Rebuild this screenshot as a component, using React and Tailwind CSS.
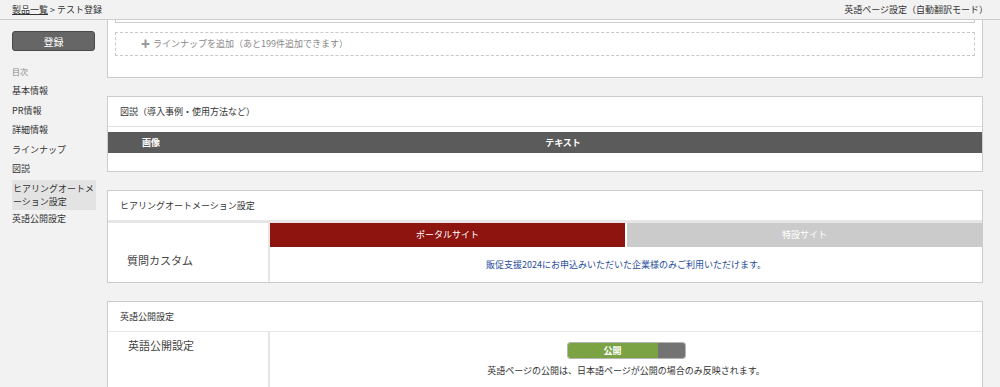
import React from 'react';

const menu = ['基本情報', 'PR情報', '詳細情報', 'ラインナップ', '図説'];

const Card = ({ title, children, className = '' }) => (
  <div className={`bg-white border border-[#cccccc] ${className}`}>
    {title && (
      <div className="h-[29px] px-[12px] flex items-center text-[9px] text-[#333]">{title}</div>
    )}
    {children}
  </div>
);

const App = () => {
  return (
    <div className="h-[387px] overflow-hidden bg-[#f2f2f2] font-['Noto_Sans_CJK_JP',sans-serif] text-[#333]">
      {/* top bar */}
      <div className="h-[20px] border-b border-[#cccccc] flex items-center justify-between pl-[12px] pr-[12px] text-[9px]">
        <div>
          <span className="underline">製品一覧</span> &gt; テスト登録
        </div>
        <div>英語ページ設定（自動翻訳モード）</div>
      </div>

      <div className="flex">
        {/* sidebar */}
        <div className="w-[107px] shrink-0 px-[12px] pt-[11px]">
          <button className="block w-[83px] h-[20px] rounded-[3px] bg-[#666666] border border-[#4a4a4a] text-white text-[10px]">
            登録
          </button>
          <div className="mt-[15px] text-[8px] leading-[12px] text-[#888]">目次</div>
          <ul className="mt-[3px] text-[9px] text-[#333]">
            {menu.map((m) => (
              <li key={m} className="h-[19.5px] flex items-center">{m}</li>
            ))}
            <li className="bg-[#e3e3e3] w-[84px] px-[1px] py-[2px] leading-[13px] mt-[1px]">
              ヒアリングオートメーション設定
            </li>
            <li className="h-[19px] flex items-center">英語公開設定</li>
          </ul>
        </div>

        {/* main */}
        <div className="flex-1 pr-[17px] flex flex-col gap-[18px]">
          <Card className="border-t-0">
            <div className="mx-[7px] h-[3px] border border-t-0 border-[#cccccc]" />
            <div className="mx-[7px] mt-[9px] h-[24px] border border-dashed border-[#c8c8c8] flex items-center pl-[25px] text-[9px] text-[#888]">
              <span className="mr-[3px] font-bold text-[#999]">✚</span>ラインナップを追加（あと199件追加できます）
            </div>
            <div className="h-[21px]" />
          </Card>

          <Card title="図説（導入事例・使用方法など）">
            <div className="border-t border-[#e0e0e0] pt-[5px]">
              <div className="h-[21px] bg-[#5b5b5b] flex items-center text-white text-[9px] font-bold">
                <div className="w-[86px] text-center">画像</div>
                <div className="w-[738px] text-center">テキスト</div>
              </div>
              <div className="h-[18px]" />
            </div>
          </Card>

          <Card title="ヒアリングオートメーション設定">
            <div className="border-t-[3px] border-[#e6e6e6] flex h-[62px]">
              <div className="w-[162px] border-r-2 border-[#e6e6e6] pl-[19px] pt-[29px] text-[11px] text-[#444]">
                質問カスタム
              </div>
              <div className="flex-1 flex flex-col">
                <div className="h-[24px] flex gap-[2px] text-[9px] text-white">
                  <div className="flex-1 bg-[#8e1410] flex items-center justify-center">ポータルサイト</div>
                  <div className="flex-1 bg-[#cbcbcb] flex items-center justify-center">特設サイト</div>
                </div>
                <div className="flex-1 flex items-center justify-center text-[9px] text-[#1f4e9c]">
                  販促支援2024にお申込みいただいた企業様のみご利用いただけます。
                </div>
              </div>
            </div>
          </Card>

          <Card title="英語公開設定">
            <div className="border-t border-[#e6e6e6] flex h-[60px]">
              <div className="w-[162px] border-r-2 border-[#e6e6e6] pl-[20px] pt-[5px] text-[11px] text-[#444]">
                英語公開設定
              </div>
              <div className="flex-1 flex flex-col items-center pt-[10px]">
                <div className="w-[119px] h-[17px] rounded-[3px] border border-[#b5b5b5] flex overflow-hidden">
                  <div className="w-[90px] bg-[#7ba344] flex items-center justify-center text-white text-[9px] font-bold">
                    公開
                  </div>
                  <div className="flex-1 bg-[#737373]" />
                </div>
                <div className="mt-[5px] text-[9px] text-[#333]">
                  英語ページの公開は、日本語ページが公開の場合のみ反映されます。
                </div>
              </div>
            </div>
          </Card>
        </div>
      </div>
    </div>
  );
};

export default App;
